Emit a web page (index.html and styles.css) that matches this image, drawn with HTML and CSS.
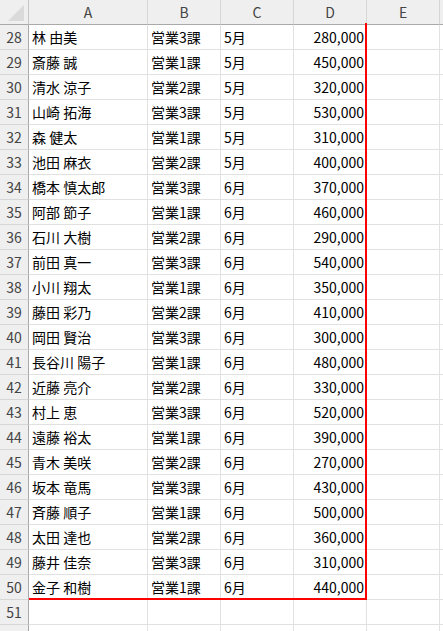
FILE: index.html
```html
<!DOCTYPE html>
<html lang="ja">
<head>
<meta charset="utf-8">
<link rel="stylesheet" href="styles.css">
</head>
<body>
<div class="sheet">
  <div class="grid">
    <div class="corner"><span class="tri"></span></div>
    <div class="colhead">A</div>
    <div class="colhead">B</div>
    <div class="colhead">C</div>
    <div class="colhead">D</div>
    <div class="colhead">E</div>
    <div class="colhead rest"></div>
  </div>
  <div class="body">
    <div class="grid">
      <div class="rowhead">28</div><div class="cell">林 由美</div><div class="cell">営業3課</div><div class="cell">5月</div><div class="cell num">280,000</div><div class="cell"></div><div class="cell rest"></div>
      <div class="rowhead">29</div><div class="cell">斎藤 誠</div><div class="cell">営業1課</div><div class="cell">5月</div><div class="cell num">450,000</div><div class="cell"></div><div class="cell rest"></div>
      <div class="rowhead">30</div><div class="cell">清水 涼子</div><div class="cell">営業2課</div><div class="cell">5月</div><div class="cell num">320,000</div><div class="cell"></div><div class="cell rest"></div>
      <div class="rowhead">31</div><div class="cell">山崎 拓海</div><div class="cell">営業3課</div><div class="cell">5月</div><div class="cell num">530,000</div><div class="cell"></div><div class="cell rest"></div>
      <div class="rowhead">32</div><div class="cell">森 健太</div><div class="cell">営業1課</div><div class="cell">5月</div><div class="cell num">310,000</div><div class="cell"></div><div class="cell rest"></div>
      <div class="rowhead">33</div><div class="cell">池田 麻衣</div><div class="cell">営業2課</div><div class="cell">5月</div><div class="cell num">400,000</div><div class="cell"></div><div class="cell rest"></div>
      <div class="rowhead">34</div><div class="cell">橋本 慎太郎</div><div class="cell">営業3課</div><div class="cell">6月</div><div class="cell num">370,000</div><div class="cell"></div><div class="cell rest"></div>
      <div class="rowhead">35</div><div class="cell">阿部 節子</div><div class="cell">営業1課</div><div class="cell">6月</div><div class="cell num">460,000</div><div class="cell"></div><div class="cell rest"></div>
      <div class="rowhead">36</div><div class="cell">石川 大樹</div><div class="cell">営業2課</div><div class="cell">6月</div><div class="cell num">290,000</div><div class="cell"></div><div class="cell rest"></div>
      <div class="rowhead">37</div><div class="cell">前田 真一</div><div class="cell">営業3課</div><div class="cell">6月</div><div class="cell num">540,000</div><div class="cell"></div><div class="cell rest"></div>
      <div class="rowhead">38</div><div class="cell">小川 翔太</div><div class="cell">営業1課</div><div class="cell">6月</div><div class="cell num">350,000</div><div class="cell"></div><div class="cell rest"></div>
      <div class="rowhead">39</div><div class="cell">藤田 彩乃</div><div class="cell">営業2課</div><div class="cell">6月</div><div class="cell num">410,000</div><div class="cell"></div><div class="cell rest"></div>
      <div class="rowhead">40</div><div class="cell">岡田 賢治</div><div class="cell">営業3課</div><div class="cell">6月</div><div class="cell num">300,000</div><div class="cell"></div><div class="cell rest"></div>
      <div class="rowhead">41</div><div class="cell">長谷川 陽子</div><div class="cell">営業1課</div><div class="cell">6月</div><div class="cell num">480,000</div><div class="cell"></div><div class="cell rest"></div>
      <div class="rowhead">42</div><div class="cell">近藤 亮介</div><div class="cell">営業2課</div><div class="cell">6月</div><div class="cell num">330,000</div><div class="cell"></div><div class="cell rest"></div>
      <div class="rowhead">43</div><div class="cell">村上 恵</div><div class="cell">営業3課</div><div class="cell">6月</div><div class="cell num">520,000</div><div class="cell"></div><div class="cell rest"></div>
      <div class="rowhead">44</div><div class="cell">遠藤 裕太</div><div class="cell">営業1課</div><div class="cell">6月</div><div class="cell num">390,000</div><div class="cell"></div><div class="cell rest"></div>
      <div class="rowhead">45</div><div class="cell">青木 美咲</div><div class="cell">営業2課</div><div class="cell">6月</div><div class="cell num">270,000</div><div class="cell"></div><div class="cell rest"></div>
      <div class="rowhead">46</div><div class="cell">坂本 竜馬</div><div class="cell">営業3課</div><div class="cell">6月</div><div class="cell num">430,000</div><div class="cell"></div><div class="cell rest"></div>
      <div class="rowhead">47</div><div class="cell">斉藤 順子</div><div class="cell">営業1課</div><div class="cell">6月</div><div class="cell num">500,000</div><div class="cell"></div><div class="cell rest"></div>
      <div class="rowhead">48</div><div class="cell">太田 達也</div><div class="cell">営業2課</div><div class="cell">6月</div><div class="cell num">360,000</div><div class="cell"></div><div class="cell rest"></div>
      <div class="rowhead">49</div><div class="cell">藤井 佳奈</div><div class="cell">営業3課</div><div class="cell">6月</div><div class="cell num">310,000</div><div class="cell"></div><div class="cell rest"></div>
      <div class="rowhead">50</div><div class="cell">金子 和樹</div><div class="cell">営業1課</div><div class="cell">6月</div><div class="cell num">440,000</div><div class="cell"></div><div class="cell rest"></div>
      <div class="rowhead">51</div><div class="cell"></div><div class="cell"></div><div class="cell"></div><div class="cell"></div><div class="cell"></div><div class="cell rest"></div>
      <div class="rowhead"></div><div class="cell"></div><div class="cell"></div><div class="cell"></div><div class="cell"></div><div class="cell"></div><div class="cell rest"></div>
    </div>
    <div class="range"></div>
  </div>
</div>
</body>
</html>
```

FILE: styles.css
```css
html, body {
  margin: 0;
  padding: 0;
  background: #ffffff;
  overflow: hidden;
}
.sheet {
  width: 443px;
  height: 631px;
  overflow: hidden;
  font-family: "Noto Sans CJK JP", "Noto Sans", sans-serif;
  font-size: 14px;
  color: #000;
}
.grid {
  display: grid;
  grid-template-columns: 29px 119px 73px 73px 73px 73px 1fr;
  grid-auto-rows: 25px;
}
.corner {
  background: #efefef;
  border-right: 1px solid #c6c6c6;
  border-bottom: 1px solid #a9a9a9;
  position: relative;
}
.tri {
  position: absolute;
  left: 8px;
  top: 5px;
  width: 16px;
  height: 16px;
  background: #dadada;
  clip-path: polygon(100% 0, 100% 100%, 0 100%);
}
.colhead {
  background: #efefef;
  border-right: 1px solid #d6d6d6;
  border-bottom: 1px solid #a9a9a9;
  color: #444;
  display: flex;
  align-items: center;
  justify-content: center;
  line-height: 1;
  padding-bottom: 1px;
  box-sizing: border-box;
}
.colhead.rest { border-right: none; }
.rowhead {
  background: #efefef;
  border-right: 1px solid #a9a9a9;
  border-bottom: 1px solid #d6d6d6;
  color: #444;
  display: flex;
  align-items: center;
  justify-content: center;
  line-height: 1;
}
.cell {
  border-right: 1px solid #e1e1e1;
  border-bottom: 1px solid #e1e1e1;
  display: flex;
  align-items: center;
  padding: 0 3px;
  white-space: nowrap;
  line-height: 1;
  overflow: hidden;
}
.cell.num { justify-content: flex-end; padding-right: 2px; }
.cell.rest { border-right: none; }
.body { position: relative; }
.range {
  position: absolute;
  left: 29px;
  top: -2px;
  width: 336px;
  height: 575px;
  border-right: 2px solid #ff0000;
  border-bottom: 2px solid #ff0000;
  pointer-events: none;
}
```
